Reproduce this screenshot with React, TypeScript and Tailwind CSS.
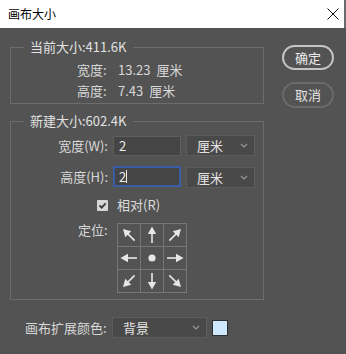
import React from "react";

const FONT = { fontFamily: '"Noto Sans CJK SC", "Noto Sans", sans-serif' };

function Chevron() {
  return (
    <svg width="8" height="5" viewBox="0 0 8 5" className="shrink-0">
      <path d="M1 1 L4 4 L7 1" fill="none" stroke="#9a9a9a" strokeWidth="1.1" />
    </svg>
  );
}

function Select({ label, w }: { label: string; w: string }) {
  return (
    <div
      className={`${w} h-[21px] flex items-center justify-between pl-[10px] pr-[6px] bg-[#494949] border border-[#5c5c5c] text-[#e4e4e4] text-[13px] leading-[19px]`}
    >
      <span>{label}</span>
      <Chevron />
    </div>
  );
}

function Arrow({ angle }: { angle: number }) {
  return (
    <svg width="22" height="22" viewBox="0 0 22 22">
      <g transform={`rotate(${angle} 11 11)`}>
        <line x1="11" y1="19" x2="11" y2="8" stroke="#e6e6e6" strokeWidth="1.6" />
        <polygon points="11,2.5 6.8,10 15.2,10" fill="#e6e6e6" />
      </g>
    </svg>
  );
}

function Dot() {
  return (
    <svg width="22" height="22" viewBox="0 0 22 22">
      <circle cx="11" cy="11" r="3.6" fill="#e6e6e6" />
    </svg>
  );
}

export default function App() {
  const cells = [-45, 0, 45, -90, null, 90, -135, 180, 135];
  return (
    <div className="w-[346px] h-[354px] bg-[#535353] flex flex-col overflow-hidden" style={FONT}>
      <div className="h-[28px] bg-white flex items-center justify-between pl-[8px] pr-[6px] border-r-[2px] border-[#6a6a6a]">
        <span className="text-[12px] text-black leading-[16px]">画布大小</span>
        <svg width="12" height="12" viewBox="0 0 12 12" className="mr-[-1px]">
          <path d="M0.5 0.5 L11.5 11.5 M11.5 0.5 L0.5 11.5" stroke="#111" strokeWidth="1" />
        </svg>
      </div>
      <div className="flex">
        <div className="ml-[10px] mt-[11px] w-[254px] flex flex-col">
          <fieldset className="border border-[#6c6c6c] pb-[2px]">
            <legend className="ml-[13px] px-[6px] text-[13px] leading-[16px] text-[#e2e2e2]">当前大小:411.6K</legend>
            <div className="pt-[4px] text-[13px] text-[#d8d8d8]">
              <div className="flex h-[21px] leading-[21px] pl-[66px]">
                <span className="w-[41px]">宽度:</span>
                <span>13.23</span>
                <span className="ml-[6px]">厘米</span>
              </div>
              <div className="flex h-[21px] leading-[21px] pl-[66px]">
                <span className="w-[41px]">高度:</span>
                <span>7.43</span>
                <span className="ml-[6px]">厘米</span>
              </div>
            </div>
          </fieldset>
          <fieldset className="mt-[9px] border border-[#6c6c6c] pb-[6px]">
            <legend className="ml-[13px] px-[6px] text-[13px] leading-[16px] text-[#e2e2e2]">新建大小:602.4K</legend>
            <div className="mt-[6px] flex items-center h-[21px] text-[13px] text-[#d8d8d8]">
              <span className="w-[97px] text-right">宽度(W):</span>
              <div className="ml-[5px] w-[68px] h-[20px] bg-[#454545] border border-[#5e5e5e] pl-[5px] leading-[18px] text-[#ececec]">2</div>
              <div className="ml-[5px]">
                <Select label="厘米" w="w-[69px]" />
              </div>
            </div>
            <div className="mt-[10px] flex items-center h-[21px] text-[13px] text-[#d8d8d8]">
              <span className="w-[97px] text-right">高度(H):</span>
              <div className="ml-[5px] w-[68px] h-[21px] bg-[#454545] border-2 border-[#3a5da6] pl-[4px] leading-[17px] text-[#ececec] flex items-center">
                <span>2</span>
                <span className="w-px h-[13px] bg-[#f0f0f0]" />
              </div>
              <div className="ml-[5px] mt-[2px]">
                <Select label="厘米" w="w-[69px]" />
              </div>
            </div>
            <div className="mt-[9px] h-[18px] flex items-center pl-[86px] text-[13px] text-[#dcdcdc]">
              <div className="w-[11px] h-[11px] bg-[#d6d6d6] rounded-[1px] flex items-center justify-center">
                <svg width="9" height="9" viewBox="0 0 9 9">
                  <path d="M1.5 4.5 L3.7 6.7 L7.6 2.3" fill="none" stroke="#3a3a3a" strokeWidth="1.8" />
                </svg>
              </div>
              <span className="ml-[9px] leading-[18px]">相对(R)</span>
            </div>
            <div className="mt-[9px] flex items-start pl-[67px]">
              <span className="w-[39px] text-[13px] leading-[16px] mt-[-1px] text-[#d8d8d8]">定位:</span>
              <div className="grid grid-cols-3 gap-px bg-[#767676] p-px">
                {cells.map((a, i) => (
                  <div key={i} className="w-[22px] h-[22px] bg-[#535353] flex items-center justify-center">
                    {a === null ? <Dot /> : <Arrow angle={a} />}
                  </div>
                ))}
              </div>
            </div>
          </fieldset>
          <div className="mt-[17px] h-[21px] flex items-center pl-[15px] text-[13px] text-[#d8d8d8]">
            <span className="w-[87px]">画布扩展颜色:</span>
            <Select label="背景" w="w-[95px]" />
            <div className="ml-[5px] w-[16px] h-[16px] bg-[#cde9fb] border border-[#2e2e2e]" />
          </div>
        </div>
        <div className="ml-[18px] mt-[17px] flex flex-col gap-[12px]">
          <div className="w-[52px] h-[25px] rounded-full border-2 border-[#c4c4c4] flex items-center justify-center text-[13px] text-[#ececec] leading-[16px]">
            确定
          </div>
          <div className="w-[52px] h-[26px] rounded-full border-2 border-[#6a6a6a] flex items-center justify-center text-[13px] text-[#e4e4e4] leading-[16px]">
            取消
          </div>
        </div>
      </div>
    </div>
  );
}
